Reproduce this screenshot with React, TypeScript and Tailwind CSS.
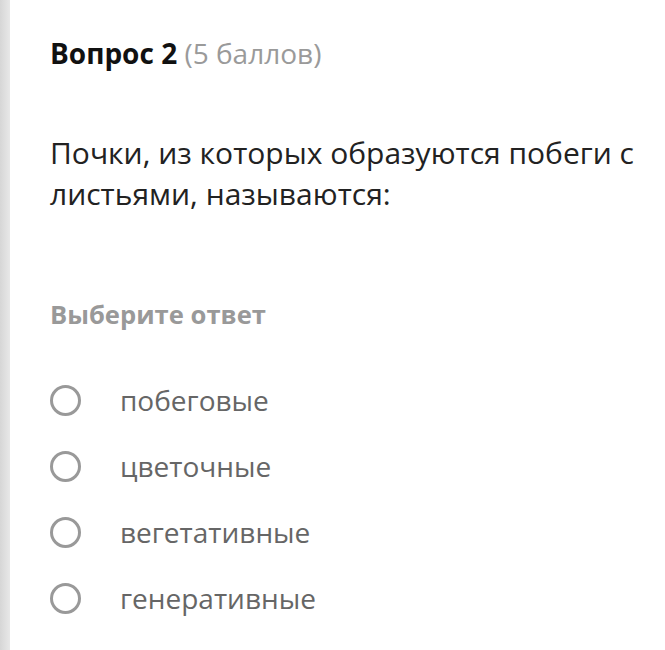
export default function App() {
  const options = ["побеговые", "цветочные", "вегетативные", "генеративные"];

  return (
    <div className="flex h-[650px] w-[665px] bg-white font-['Open_Sans',sans-serif]">
      <div className="w-[10px] shrink-0 bg-gradient-to-r from-[#d6d6d6] to-[#e8e8e8]" />
      <div className="flex-1 pl-[40px] pt-[34px]">
        <h2 className="text-[28px] leading-[38px] text-[#111]">
          <span className="font-bold">Вопрос 2</span>{" "}
          <span className="text-[#9a9a9a]">(5 баллов)</span>
        </h2>

        <p className="mt-[60px] text-[30px] leading-[41px] text-[#222]">
          Почки, из которых образуются побеги с листьями, называются:
        </p>

        <div className="mt-[85px] text-[25.6px] font-bold leading-[32px] text-[#999]">
          Выберите ответ
        </div>

        <div className="mt-[53px] flex flex-col gap-[34px]">
          {options.map((opt) => (
            <label key={opt} className="flex h-[32px] items-center">
              <span className="h-[31px] w-[31px] shrink-0 rounded-full border-[3.5px] border-[#999]" />
              <span className="ml-[39px] text-[28px] leading-[32px] text-[#666]">{opt}</span>
            </label>
          ))}
        </div>
      </div>
    </div>
  );
}
